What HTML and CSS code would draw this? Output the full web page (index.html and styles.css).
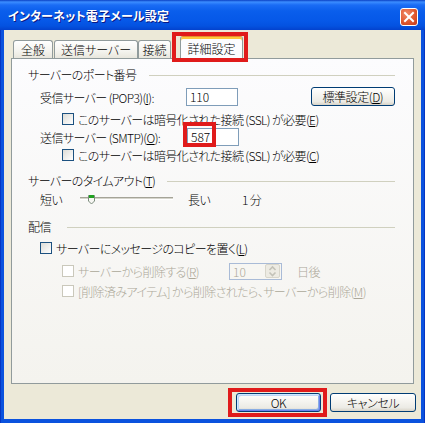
FILE: index.html
```html
<!DOCTYPE html>
<html lang="ja">
<head>
<meta charset="utf-8">
<title>インターネット電子メール設定</title>
<link rel="stylesheet" href="styles.css">
</head>
<body>
<div class="window">
  <div class="titlebar">
    <span class="title">インターネット電子メール設定</span>
    <span class="close">
      <svg width="18" height="18" viewBox="0 0 18 18">
        <path d="M5 5 L13 13 M13 5 L5 13" stroke="#fff" stroke-width="2" stroke-linecap="square"/>
      </svg>
    </span>
  </div>
  <div class="client">
    <div class="tabs">
      <div class="tab t1">全般</div>
      <div class="tab t2">送信サーバー</div>
      <div class="tab t3">接続</div>
      <div class="tab active">詳細設定</div>
    </div>
    <div class="panel">
      <div class="group g1"><span>サーバーのポート番号</span><i class="rule"></i></div>
      <div class="row r-pop">
        <span class="lbl">受信サーバー (POP3)(<u>I</u>):</span>
        <span class="edit">110</span>
        <span class="btn btn-std">標準設定(<u>D</u>)</span>
      </div>
      <div class="check ind2 r-cb1"><span class="box"></span>このサーバーは暗号化された接続 (SSL) が必要(<u>E</u>)</div>
      <div class="row r-smtp">
        <span class="lbl">送信サーバー (SMTP)(<u>O</u>):</span>
        <span class="edit">587</span>
      </div>
      <div class="check ind2 r-cb2"><span class="box"></span>このサーバーは暗号化された接続 (SSL) が必要(<u>C</u>)</div>
      <div class="group g2"><span>サーバーのタイムアウト(<u>T</u>)</span><i class="rule"></i></div>
      <div class="row r-slider">
        <span class="short">短い</span>
        <svg class="slider" width="95" height="14" viewBox="0 0 95 14">
          <rect x="0" y="5" width="93" height="1" fill="#A5A498"/>
          <rect x="0" y="6" width="93" height="1" fill="#D6D5CC"/>
          <rect x="0" y="7" width="93" height="1" fill="#FFFFFF"/>
          <path d="M8.5 3.5 H14.5 V9 L11.5 12 L8.5 9 Z" fill="#F7F7F4" stroke="#7C8C7C"/>
          <rect x="9" y="3" width="5" height="3" fill="#21A121"/>
        </svg>
        <span class="long">長い</span>
        <span class="val">1 分</span>
      </div>
      <div class="group g3"><span>配信</span><i class="rule"></i></div>
      <div class="check ind1 r-cbl"><span class="box"></span>サーバーにメッセージのコピーを置く(<u>L</u>)</div>
      <div class="row r-del">
        <div class="check ind2 dis"><span class="box"></span>サーバーから削除する(<u>R</u>)</div>
        <span class="spin"><span class="spin-val">10</span><span class="spin-btns"><svg width="13" height="14" viewBox="0 0 13 14"><path d="M3.5 6 L6.5 3 L9.5 6" fill="none" stroke="#C3C2B8" stroke-width="1.6"/><path d="M3.5 8.5 L6.5 11.5 L9.5 8.5" fill="none" stroke="#C3C2B8" stroke-width="1.6"/></svg></span></span>
        <span class="days">日後</span>
      </div>
      <div class="check ind2 dis r-cbm"><span class="box"></span>[削除済みアイテム] から削除されたら、サーバーから削除(<u>M</u>)</div>
    </div>
    <div class="buttons">
      <span class="btn btn-ok">OK</span>
      <span class="btn btn-cancel">キャンセル</span>
    </div>
  </div>
  <span class="mark mark-tab"></span>
  <span class="mark mark-smtp"></span>
  <span class="mark mark-ok"></span>
</div>
</body>
</html>
```
FILE: styles.css
```css
* { box-sizing: border-box; }
html, body { margin: 0; padding: 0; }
body {
  width: 425px;
  height: 423px;
  overflow: hidden;
  font-family: "Noto Sans CJK JP", "Liberation Sans", sans-serif;
  font-size: 12px;
  font-weight: 300;
  font-feature-settings: "palt";
  color: #000;
  background: #0A4FDB;
}
u { text-decoration: underline; text-underline-offset: 1px; }

.window {
  position: relative;
  width: 425px;
  height: 423px;
  display: flex;
  flex-direction: column;
  background: linear-gradient(90deg, #0019A8 0, #0A52DE 1px, #0A52DE 424px, #0019A8 425px);
}

.titlebar {
  height: 30px;
  flex: none;
  display: flex;
  align-items: center;
  padding: 0 7px 0 8px;
  background: linear-gradient(180deg, #0A40C4 0, #3B8DFF 2px, #1A6CF5 5px, #0A5EEC 11px, #0658E8 21px, #0452E0 26px, #0342CE 30px);
}
.title {
  flex: 1;
  color: #fff;
  font-weight: bold;
  font-size: 12px;
  letter-spacing: 0.2px;
  text-shadow: 1px 1px 0 #0A1883;
  margin-top: 1px;
}
.close {
  width: 18px;
  height: 18px;
  margin-top: 4px;
  border: 1px solid #fff;
  border-radius: 3px;
  background: radial-gradient(circle at 35% 30%, #F08A6A 0, #E0582F 55%, #C43A1A 100%);
  display: flex;
}
.close svg { display: block; margin: -1px; }

.client {
  flex: 1;
  margin: 0 4px 4px;
  background: #ECE9D8;
  display: flex;
  flex-direction: column;
  padding: 6px 7px 0 7px;
}

.tabs {
  height: 22px;
  flex: none;
  display: flex;
  align-items: flex-end;
  padding-left: 2px;
  position: relative;
  z-index: 2;
}
.tab {
  height: 18px;
  border: 1px solid #919B9C;
  border-bottom: none;
  border-radius: 3px 3px 0 0;
  background: linear-gradient(180deg, #FFFFFF 0, #F4F3EE 60%, #E8E6DD 100%);
  display: flex;
  align-items: center;
  justify-content: center;
  line-height: 1;
  padding-top: 1px;
}
.t1 { width: 40px; }
.t2 { width: 84px; margin-left: 1px; }
.t3 { width: 33px; }
.tab.active {
  width: 63px;
  height: 23px;
  margin-left: 9px;
  margin-bottom: -1px;
  background: #FCFCFE;
  border-top: 1px solid #E68B2C;
  box-shadow: inset 0 2px 0 #FFC73C;
  padding-top: 2px;
}

.panel {
  height: 326px;
  flex: none;
  border: 1px solid #919B9C;
  background: linear-gradient(180deg, #FCFCFE 0, #F4F3EE 100%);
  padding: 0 18px 0 16px;
  display: flex;
  flex-direction: column;
  letter-spacing: -0.6px;
}

.group {
  height: 14px;
  display: flex;
  align-items: center;
  justify-content: space-between;
  line-height: 14px;
}
.rule { display: block; height: 1px; background: #D0D0BF; }
.g1 { margin-top: 9px; }
.g1 .rule { width: 246px; }
.g2 { margin-top: 12px; }
.g2 .rule { width: 228px; }
.g3 { margin-top: 14px; }
.g3 .rule { width: 328px; }

.row { display: flex; align-items: center; height: 18px; padding-left: 12px; }
.lbl { width: 147px; white-space: nowrap; }
.edit {
  width: 52px;
  height: 18px;
  border: 1px solid #7F9DB9;
  background: #fff;
  padding: 0 0 0 3px;
  line-height: 16px;
  letter-spacing: 0;
}
.r-pop { margin-top: 6px; }
.r-smtp { margin-top: 2px; }

.btn {
  display: flex;
  align-items: center;
  justify-content: center;
  height: 19px;
  border: 1px solid #003C74;
  border-radius: 3px;
  background: linear-gradient(180deg, #FFFFFF 0, #F6F5F1 40%, #ECEBE5 80%, #D8D3C7 100%);
  line-height: 1;
  white-space: nowrap;
  letter-spacing: -0.4px;
}
.btn-std { width: 85px; margin-left: 73px; margin-top: -1px; }

.check {
  display: flex;
  align-items: center;
  height: 14px;
  white-space: nowrap;
}
.check .box {
  width: 12px;
  height: 12px;
  border: 1px solid #1C5180;
  background: linear-gradient(135deg, #DCDCD7 0, #FFFFFF 100%);
  margin-right: 4px;
  flex: none;
}
.ind1 { padding-left: 12px; }
.ind2 { padding-left: 34px; }
.r-cb1 { margin-top: 6px; }
.r-cb2 { margin-top: 2px; }
.r-cbl { margin-top: 7px; }
.check.dis { color: #ACA899; }
.check.dis .box { border-color: #CAC8BB; background: #FFFFFF; }

.r-slider { margin-top: 4px; height: 14px; }
.short { width: 40px; }
.slider { display: block; }
.long { margin-left: 13px; width: 54px; }

.r-del { padding-left: 0; height: 16px; margin-top: 8px; }
.r-del .check { width: 201px; }
.spin {
  width: 53px;
  height: 17px;
  border: 1px solid #A9BBD7;
  background: #F7F6F2;
  display: flex;
  align-items: center;
  justify-content: space-between;
  padding: 0 1px 0 3px;
  color: #ACA899;
  letter-spacing: 0;
}
.spin-btns {
  width: 15px;
  height: 14px;
  border: 1px solid #D8D6CB;
  border-radius: 2px;
  background: #EDEBE3;
  display: flex;
  align-items: center;
  justify-content: center;
  overflow: hidden;
}
.spin-btns svg { display: block; }
.days { margin-left: 15px; color: #ACA899; }
.r-cbm { margin-top: 5px; }

.buttons {
  display: flex;
  justify-content: flex-end;
  gap: 9px;
  margin-top: 9px;
  margin-right: -2px;
}
.btn-ok {
  width: 85px;
  box-shadow: inset 1px 1px 0 #CEE7FF, inset -1px -1px 0 #6982EE, inset 2px 2px 0 #BCD4F6, inset -2px -2px 0 #89ADE4;
}
.btn-cancel { width: 86px; }

.mark {
  position: absolute;
  border: 4px solid #E01B1B;
  z-index: 5;
}
.mark-tab { left: 172px; top: 32px; width: 76px; height: 30px; }
.mark-smtp { left: 183px; top: 122px; width: 33px; height: 25px; }
.mark-ok { left: 228px; top: 388px; width: 99px; height: 29px; }
```
